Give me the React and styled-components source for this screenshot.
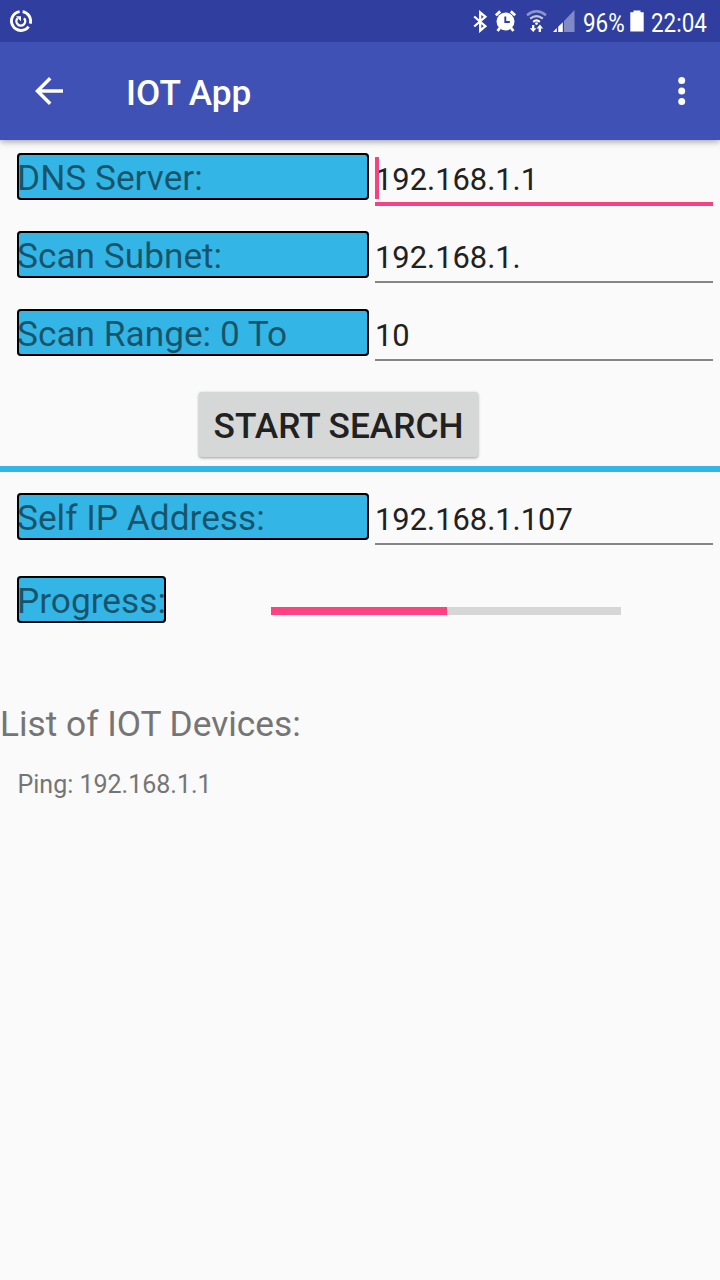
import React from "react";
import styled, { createGlobalStyle } from "styled-components";

const GlobalStyle = createGlobalStyle`
  * { box-sizing: border-box; }
  body { margin: 0; background: #fafafa; font-family: Roboto, "Liberation Sans", sans-serif; }
`;

const Screen = styled.div`
  width: 720px;
  height: 1280px;
  overflow: hidden;
  display: flex;
  flex-direction: column;
  background: #fafafa;
`;

const StatusBar = styled.div`
  position: relative;
  z-index: 1;
  height: 42px;
  flex: none;
  display: flex;
  align-items: center;
  justify-content: space-between;
  padding: 0 11px 0 10px;
  background: #303f9f;
`;

const StatusIcons = styled.div`
  display: flex;
  align-items: center;
`;

const Icon = styled.svg`
  display: block;
  flex: none;
  margin-left: ${(p) => p.$gap || 0}px;
`;

const StatusText = styled.span`
  width: ${(p) => p.$width}px;
  margin-left: ${(p) => p.$gap}px;
  font-size: 25.5px;
  line-height: 42px;
  padding-top: 2px;
  height: 42px;
  color: #fff;
  white-space: nowrap;
  transform: scaleX(0.88);
  transform-origin: left;
`;

const AppBar = styled.header`
  height: 98px;
  flex: none;
  display: flex;
  align-items: center;
  padding: 0 34px 0 35px;
  background: #3f51b5;
  color: #fff;
  box-shadow: 0 1px 7px rgba(0, 0, 0, 0.42);
`;

const Title = styled.h1`
  flex: 1;
  margin: 5px 0 0 63px;
  font-size: 35.2px;
  line-height: 41px;
  font-weight: 500;
`;

const Row = styled.div`
  display: flex;
  flex: none;
  height: 78px;
  padding: 13px 7px 0 17px;
`;

const Label = styled.div`
  width: ${(p) => p.$width || 352}px;
  height: 47px;
  flex: none;
  padding-top: 5px;
  border-radius: 4px;
  background: #33b5e5;
  box-shadow: inset 0 0 0 2px #000;
  color: rgba(0, 0, 0, 0.54);
  font-size: 35.25px;
  line-height: 41px;
  white-space: nowrap;
`;

const Field = styled.div`
  position: relative;
  flex: 1;
  height: ${(p) => (p.$focused ? 53 : 52)}px;
  margin: 0 0 0 6px;
  padding-top: 8px;
  border-bottom: ${(p) => (p.$focused ? "4px solid #f44380" : "2px solid #858585")};
  color: #212121;
  font-size: 30.85px;
  line-height: 37px;
  white-space: nowrap;
`;

const Caret = styled.span`
  position: absolute;
  left: 0;
  top: 4px;
  width: 4px;
  height: 42px;
  background: #f44380;
`;

const ButtonRow = styled.div`
  height: 92px;
  flex: none;
  padding: 18px 0 0 199px;
`;

const Button = styled.button`
  display: block;
  width: 279px;
  height: 65px;
  padding: 3px 0 0;
  border: 0;
  border-radius: 3px;
  background: #d6d7d7;
  box-shadow: 0 1px 3px rgba(0, 0, 0, 0.38);
  color: #212121;
  font: 500 35.25px/41px Roboto, "Liberation Sans", sans-serif;
`;

const Divider = styled.div`
  height: 6px;
  flex: none;
  margin-bottom: 8px;
  background: #33b5e5;
`;

const ProgressRow = styled.div`
  display: flex;
  flex: none;
  align-items: flex-start;
  padding: 18px 0 0 17px;
`;

const Track = styled.div`
  width: 350px;
  height: 8px;
  margin: 31px 0 0 105px;
  background: #d6d6d6;
`;

const Bar = styled.div`
  height: 100%;
  background: #ff4081;
`;

const ListTitle = styled.h2`
  margin: 81px 0 0;
  font-size: 35.25px;
  line-height: 41px;
  font-weight: 400;
  color: #757575;
`;

const ListItem = styled.div`
  margin: 25px 0 0 17.5px;
  font-size: 25px;
  line-height: 30px;
  color: #757575;
`;

function SyncIcon() {
  return (
    <Icon width="22" height="22" viewBox="0 0 22 22" fill="none" stroke="#fff">
      <path d="M9.6 1.6A9.5 9.5 0 1 0 18.6 16.7M12.6 1.6A9.5 9.5 0 0 1 20.2 13.6" strokeWidth="2.9" />
      <path d="M7.6 8.2A4.4 4.4 0 1 0 14 8.2" strokeWidth="2.4" />
      <path d="M6 6.2H11V11.2Z" fill="#fff" stroke="none" />
    </Icon>
  );
}

function BluetoothIcon() {
  return (
    <Icon width="15" height="23" viewBox="0 0 15 23" fill="none" stroke="#fff" strokeWidth="2.3">
      <path d="M1.2 6.5L12.4 16.2L7.2 20.6V2.4L12.4 6.8L1.2 16.5" />
    </Icon>
  );
}

function AlarmIcon() {
  return (
    <Icon $gap={7} width="21" height="22" viewBox="0 0 21 22">
      <circle cx="10.5" cy="11.5" r="9" fill="#fff" />
      <path d="M0.8 5.3L5.2 1.4M20.2 5.3L15.8 1.4M4.8 18L2.6 21M16.2 18L18.4 21" stroke="#fff" strokeWidth="2.8" />
      <path d="M10.3 6.5V12H14.8" stroke="#303f9f" strokeWidth="1.9" fill="none" />
    </Icon>
  );
}

function WifiIcon() {
  return (
    <Icon $gap={10} width="21" height="22" viewBox="0 0 21 22" fill="none">
      <path d="M1 5.2Q10.5 -2.5 20 5.2" stroke="#8c95cc" strokeWidth="2.4" />
      <path d="M4.2 8.7Q10.5 3.6 16.8 8.7" stroke="#c3c8e6" strokeWidth="2.3" />
      <path d="M7.2 11.8Q10.5 9 13.8 11.8" stroke="#fff" strokeWidth="2.2" />
      <circle cx="10.5" cy="13.6" r="1.4" fill="#fff" />
      <path d="M7.2 15V20M13.8 22V17" stroke="#fff" strokeWidth="2.3" />
      <path d="M3.8 18.2H10.4L7.2 22ZM10.6 18.6H17.2L13.8 14.6Z" fill="#fff" />
    </Icon>
  );
}

function SignalIcon() {
  return (
    <Icon $gap={6} width="22" height="22" viewBox="0 0 22 22">
      <path d="M11 11L21.5 0V22H11Z" fill="#8189c6" />
      <path d="M0 22L3.8 18V22ZM5.2 16.8L9.8 12.2V22H5.2Z" fill="#fff" />
    </Icon>
  );
}

function BatteryIcon() {
  return (
    <Icon $gap={6} width="14" height="22" viewBox="0 0 14 22">
      <path d="M3.5 0.5H10.5V2.2H13.7V21.5H0.3V2.2H3.5Z" fill="#fff" />
    </Icon>
  );
}

function BackIcon() {
  return (
    <Icon width="28" height="28" viewBox="4 4 16 16" fill="#fff">
      <path d="M20 11H7.83l5.59-5.59L12 4l-8 8 8 8 1.41-1.41L7.83 13H20z" />
    </Icon>
  );
}

function MoreIcon() {
  return (
    <Icon width="8" height="28" viewBox="0 0 8 28" fill="#fff">
      <circle cx="3.7" cy="3.6" r="3.5" />
      <circle cx="3.7" cy="14.1" r="3.5" />
      <circle cx="3.7" cy="24.4" r="3.5" />
    </Icon>
  );
}

function FormRow({ label, value, focused }) {
  return (
    <Row>
      <Label>{label}</Label>
      <Field $focused={focused}>
        {focused && <Caret />}
        {value}
      </Field>
    </Row>
  );
}

export default function App() {
  return (
    <Screen>
      <GlobalStyle />
      <StatusBar>
        <SyncIcon />
        <StatusIcons>
          <BluetoothIcon />
          <AlarmIcon />
          <WifiIcon />
          <SignalIcon />
          <StatusText $width={41} $gap={8}>96%</StatusText>
          <BatteryIcon />
          <StatusText $width={58} $gap={7}>22:04</StatusText>
        </StatusIcons>
      </StatusBar>
      <AppBar>
        <BackIcon />
        <Title>IOT App</Title>
        <MoreIcon />
      </AppBar>
      <FormRow label="DNS Server:" value="192.168.1.1" focused />
      <FormRow label="Scan Subnet:" value="192.168.1." />
      <FormRow label="Scan Range: 0 To" value="10" />
      <ButtonRow>
        <Button>START SEARCH</Button>
      </ButtonRow>
      <Divider />
      <FormRow label="Self IP Address:" value="192.168.1.107" />
      <ProgressRow>
        <Label $width={149}>Progress:</Label>
        <Track>
          <Bar style={{ width: "50.3%" }} />
        </Track>
      </ProgressRow>
      <ListTitle>List of IOT Devices:</ListTitle>
      <ListItem>Ping: 192.168.1.1</ListItem>
    </Screen>
  );
}
